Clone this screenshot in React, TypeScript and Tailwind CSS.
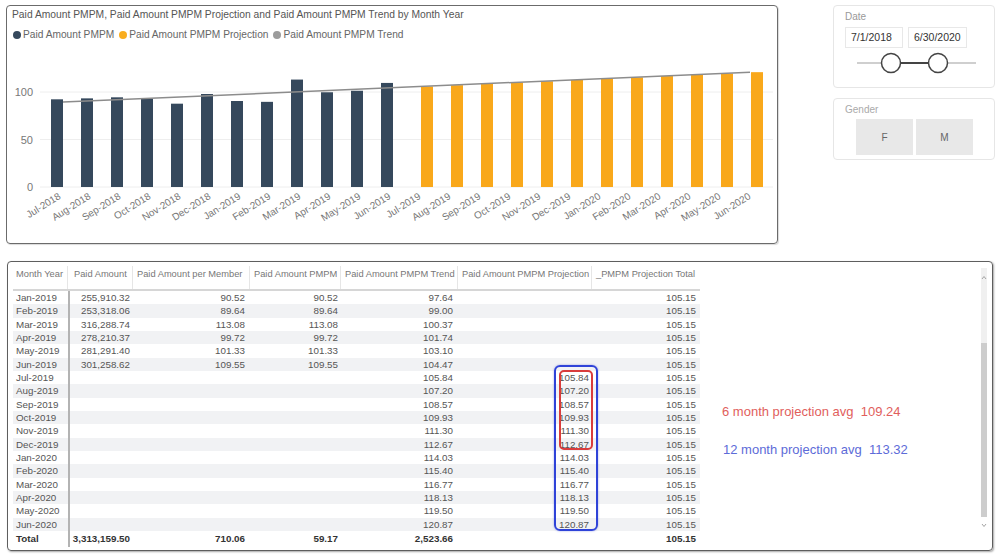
import React from "react";

const FONT = { fontFamily: '"Liberation Sans", Arial, sans-serif' };

const months = [
  "Jul-2018", "Aug-2018", "Sep-2018", "Oct-2018", "Nov-2018", "Dec-2018",
  "Jan-2019", "Feb-2019", "Mar-2019", "Apr-2019", "May-2019", "Jun-2019",
  "Jul-2019", "Aug-2019", "Sep-2019", "Oct-2019", "Nov-2019", "Dec-2019",
  "Jan-2020", "Feb-2020", "Mar-2020", "Apr-2020", "May-2020", "Jun-2020",
];

const actual = [92.3, 93.3, 94.4, 93, 87.7, 97.9, 90.52, 89.64, 113.08, 99.72, 101.33, 109.55];
const projection = [105.84, 107.2, 108.57, 109.93, 111.3, 112.67, 114.03, 115.4, 116.77, 118.13, 119.5, 120.87];

// chart geometry in page pixels; clustered columns, so the two series sit
// left / right of the category centre
const base = 187;
const scale = 0.95;
const catX = (i: number) => 62 + i * 30;
const barX = (i: number) => (i < 12 ? catX(i) - 11 : catX(i) - 1);
const yOf = (v: number) => base - v * scale;

type Row = {
  month: string;
  paid?: string;
  perMember?: string;
  pmpm?: string;
  trend: string;
  proj?: string;
};

const rows: Row[] = [
  { month: "Jan-2019", paid: "255,910.32", perMember: "90.52", pmpm: "90.52", trend: "97.64" },
  { month: "Feb-2019", paid: "253,318.06", perMember: "89.64", pmpm: "89.64", trend: "99.00" },
  { month: "Mar-2019", paid: "316,288.74", perMember: "113.08", pmpm: "113.08", trend: "100.37" },
  { month: "Apr-2019", paid: "278,210.37", perMember: "99.72", pmpm: "99.72", trend: "101.74" },
  { month: "May-2019", paid: "281,291.40", perMember: "101.33", pmpm: "101.33", trend: "103.10" },
  { month: "Jun-2019", paid: "301,258.62", perMember: "109.55", pmpm: "109.55", trend: "104.47" },
  { month: "Jul-2019", trend: "105.84", proj: "105.84" },
  { month: "Aug-2019", trend: "107.20", proj: "107.20" },
  { month: "Sep-2019", trend: "108.57", proj: "108.57" },
  { month: "Oct-2019", trend: "109.93", proj: "109.93" },
  { month: "Nov-2019", trend: "111.30", proj: "111.30" },
  { month: "Dec-2019", trend: "112.67", proj: "112.67" },
  { month: "Jan-2020", trend: "114.03", proj: "114.03" },
  { month: "Feb-2020", trend: "115.40", proj: "115.40" },
  { month: "Mar-2020", trend: "116.77", proj: "116.77" },
  { month: "Apr-2020", trend: "118.13", proj: "118.13" },
  { month: "May-2020", trend: "119.50", proj: "119.50" },
  { month: "Jun-2020", trend: "120.87", proj: "120.87" },
];

const Chart = () => (
  <svg width={770} height={200} viewBox="7 42 770 200" className="block">
    {[0, 50, 100].map((v) => (
      <g key={v}>
        <line x1={40} x2={773} y1={yOf(v)} y2={yOf(v)} stroke="#eeeeee" strokeWidth={1} />
        <text x={33} y={yOf(v) + 4} textAnchor="end" fontSize={11} fill="#777" style={FONT}>
          {v}
        </text>
      </g>
    ))}
    {months.map((m, i) => {
      const v = i < 12 ? actual[i] : projection[i - 12];
      return (
        <rect
          key={m}
          x={barX(i)}
          y={yOf(v)}
          width={12}
          height={base - yOf(v)}
          fill={i < 12 ? "#35485c" : "#f9a81b"}
        />
      );
    })}
    <line x1={63} y1={yOf(89.44)} x2={750} y2={yOf(120.87)} stroke="#8c8c8c" strokeWidth={1.5} />
    {months.map((m, i) => (
      <text
        key={m}
        transform={`translate(${catX(i) - 0.5},${198}) rotate(-32)`}
        textAnchor="end"
        fontSize={10}
        fill="#777"
        style={FONT}
      >
        {m}
      </text>
    ))}
  </svg>
);

const LegendItem = ({ color, label }: { color: string; label: string }) => (
  <div className="flex items-center gap-[2px]">
    <span className="inline-block w-[8px] h-[8px] rounded-full" style={{ backgroundColor: color }} />
    <span>{label}</span>
  </div>
);

const Chevron = ({ up }: { up?: boolean }) => (
  <svg width={6} height={5} viewBox="0 0 6 5" className="block">
    <path d={up ? "M1 4 L3 1.5 L5 4" : "M1 1 L3 3.5 L5 1"} fill="none" stroke="#9a9a9a" strokeWidth={0.9} />
  </svg>
);

const cols = [
  { key: "paid", label: "Paid Amount", w: "w-[63px]" },
  { key: "perMember", label: "Paid Amount per Member", w: "w-[117px]" },
  { key: "pmpm", label: "Paid Amount PMPM", w: "w-[91px]" },
  { key: "trend", label: "Paid Amount PMPM Trend", w: "w-[117px]" },
  { key: "proj", label: "Paid Amount PMPM Projection", w: "w-[134px]" },
  { key: "total", label: "_PMPM Projection Total", w: "w-[108px]" },
] as const;

const App = () => {
  return (
    <div className="w-[999px] h-[556px] bg-white overflow-hidden" style={FONT}>
      {/* top: chart + slicers */}
      <div className="flex pt-[5px] pl-[6px]">
        <div className="w-[772px] h-[239px] border border-[#6b6b6b] rounded-[4px] shadow-[1px_1px_1px_rgba(0,0,0,0.15)]">
          <div className="pl-[5px] pt-[2px] text-[10.3px] leading-[14px] text-[#555]">
            Paid Amount PMPM, Paid Amount PMPM Projection and Paid Amount PMPM Trend by Month Year
          </div>
          <div className="flex gap-[5px] pl-[6px] mt-[6px] text-[10.2px] leading-[14px] text-[#666]">
            <LegendItem color="#36495d" label="Paid Amount PMPM" />
            <LegendItem color="#f9ad1e" label="Paid Amount PMPM Projection" />
            <LegendItem color="#9c9c9c" label="Paid Amount PMPM Trend" />
          </div>
          <Chart />
        </div>

        <div className="ml-[55px] flex flex-col gap-[10px]">
          <div className="w-[162px] h-[83px] border border-[#e6e6e6] rounded-[4px] px-[11px] pt-[5px]">
            <div className="text-[10px] leading-[12px] text-[#999]">Date</div>
            <div className="flex gap-[5px] mt-[4px]">
              <div className="w-[58px] h-[21px] border border-[#e8e8e8] pl-[5px] text-[10.5px] leading-[19px] text-[#333]">
                7/1/2018
              </div>
              <div className="w-[59px] h-[21px] border border-[#e8e8e8] pl-[5px] text-[10.5px] leading-[19px] text-[#333]">
                6/30/2020
              </div>
            </div>
            <svg width={140} height={26} viewBox="844 50 140 26" className="block mt-[2px]">
              <line x1={856} x2={975} y1={63} y2={63} stroke="#cfcfcf" strokeWidth={2} />
              <line x1={890} x2={937} y1={63} y2={63} stroke="#444" strokeWidth={2} />
              <circle cx={890} cy={63} r={9.5} fill="#fff" stroke="#444" strokeWidth={1.5} />
              <circle cx={937} cy={63} r={9.5} fill="#fff" stroke="#444" strokeWidth={1.5} />
            </svg>
          </div>
          <div className="w-[162px] h-[62px] border border-[#e6e6e6] rounded-[4px] px-[11px] pt-[5px]">
            <div className="text-[10px] leading-[12px] text-[#aaa]">Gender</div>
            <div className="flex gap-[3px] ml-[11px] mt-[3px]">
              <div className="w-[57px] h-[36px] bg-[#e8e8e8] flex items-center justify-center text-[10px] text-[#666]">
                F
              </div>
              <div className="w-[57px] h-[36px] bg-[#e8e8e8] flex items-center justify-center text-[10px] text-[#666]">
                M
              </div>
            </div>
          </div>
        </div>
      </div>

      {/* bottom: table */}
      <div className="ml-[7px] mt-[17px] w-[986px] h-[290px] border border-[#5e5e5e] rounded-[4px] shadow-[1px_1px_2px_rgba(0,0,0,0.35)] flex pl-[5px] pt-[4px]">
        <div className="relative w-[687px]">
          {/* header */}
          <div className="flex h-[25px] border-b-2 border-[#d6d6d6] text-[9.3px] leading-[14px] text-[#777]">
            <div className="w-[55px] pl-[3px] pt-[1px] border-r border-[#e6e6e6] whitespace-nowrap">Month Year</div>
            <div className="w-[2px]" />
            {cols.map((c, i) => (
              <div
                key={c.key}
                className={`${c.w} pl-[4px] pt-[1px] whitespace-nowrap ${i < cols.length - 1 ? "border-r border-[#e6e6e6]" : ""}`}
              >
                {c.label}
              </div>
            ))}
          </div>

          {/* body */}
          {rows.map((r, i) => (
            <div
              key={r.month}
              className={`flex h-[13.33px] text-[9.8px] leading-[13.33px] text-[#555] ${i % 2 === 1 ? "bg-[#f1f2f4]" : "bg-white"}`}
            >
              <div className="w-[55px] pl-[3px]">{r.month}</div>
              <div className="w-[2px] bg-[#b3b3b3]" />
              <div className="w-[63px] text-right pr-[3px]">{r.paid}</div>
              <div className="w-[117px] text-right pr-[5px]">{r.perMember}</div>
              <div className="w-[91px] text-right pr-[3px]">{r.pmpm}</div>
              <div className="w-[117px] text-right pr-[5px]">{r.trend}</div>
              <div className="w-[134px] text-right pr-[3px]">{r.proj}</div>
              <div className="w-[108px] text-right pr-[4px]">105.15</div>
            </div>
          ))}

          {/* total */}
          <div className="flex h-[16px] text-[9.8px] leading-[16px] font-bold text-[#333]">
            <div className="w-[55px] pl-[3px]">Total</div>
            <div className="w-[2px] bg-[#b3b3b3]" />
            <div className="w-[63px] text-right pr-[3px]">3,313,159.50</div>
            <div className="w-[117px] text-right pr-[5px]">710.06</div>
            <div className="w-[91px] text-right pr-[3px]">59.17</div>
            <div className="w-[117px] text-right pr-[5px]">2,523.66</div>
            <div className="w-[134px] text-right pr-[3px]" />
            <div className="w-[108px] text-right pr-[4px]">105.15</div>
          </div>

          {/* highlight boxes */}
          <div className="absolute left-[541px] top-[99px] w-[44px] h-[166px] border-2 border-[#2f43d8] rounded-[6px] shadow-[0_0_2px_rgba(47,67,216,0.5)]" />
          <div className="absolute left-[546px] top-[104px] w-[34px] h-[80px] border-2 border-[#d93c3c] rounded-[5px]" />
        </div>

        <div className="ml-[22px] pt-[138px] text-[13px] leading-[16px]">
          <div className="whitespace-pre text-[#e15e5c]">6 month projection avg  109.24</div>
          <div className="whitespace-pre text-[#5d6bd8] mt-[22px] ml-[1px]">12 month projection avg  113.32</div>
        </div>

        <div className="ml-auto mr-[5px] mt-[2px] w-[6px] h-[268px] flex flex-col">
          <div className="h-[75px] bg-[#f0f0f0] flex justify-center pt-[7px]">
            <Chevron up />
          </div>
          <div className="h-[174px] bg-[#cdcdcd]" />
          <div className="h-[19px] flex justify-center pt-[6px]">
            <Chevron />
          </div>
        </div>
      </div>
    </div>
  );
};

export default App;
